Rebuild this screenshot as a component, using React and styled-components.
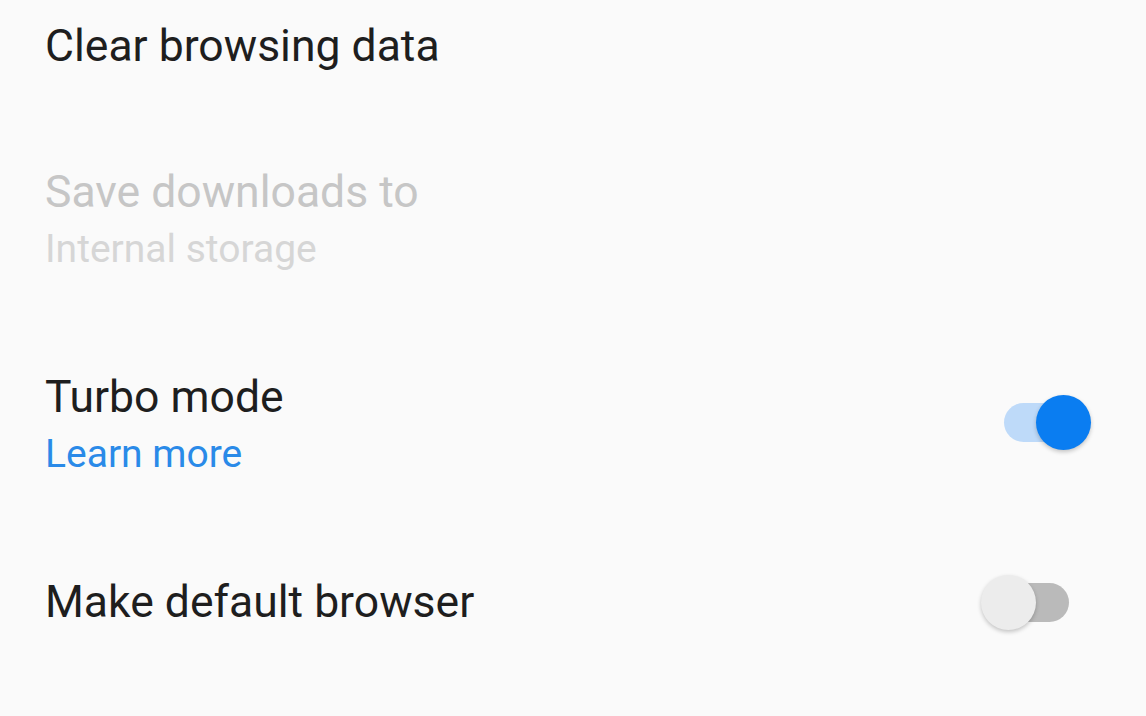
import React from "react";
import styled, { createGlobalStyle } from "styled-components";

const GlobalStyle = createGlobalStyle`
  html, body {
    margin: 0;
    padding: 0;
    background: #fafafa;
  }
  body {
    font-family: Roboto, "Noto Sans", "Liberation Sans", sans-serif;
    -webkit-font-smoothing: antialiased;
  }
`;

const Screen = styled.div`
  width: 1146px;
  height: 716px;
  overflow: hidden;
  background: #fafafa;
`;

const List = styled.div`
  display: flex;
  flex-direction: column;
  gap: 90px;
  padding-top: 18px;
`;

const Row = styled.div`
  display: flex;
  align-items: center;
  justify-content: space-between;
  padding-left: 45px;
  padding-right: ${(p) => p.$trail || 0}px;
`;

const TextBlock = styled.div`
  display: flex;
  flex-direction: column;
`;

const Title = styled.div`
  font-size: 44.5px;
  line-height: 56px;
  color: ${(p) => (p.$disabled ? "#c6c6c6" : "#1e1e1e")};
  white-space: nowrap;
`;

const Subtitle = styled.div`
  font-size: 39px;
  line-height: 59px;
  color: ${(p) => (p.$link ? "#2a8ae8" : p.$disabled ? "#d6d6d6" : "#757575")};
  white-space: nowrap;
`;

const SwitchBox = styled.div`
  position: relative;
  width: 79px;
  height: 55px;
  flex-shrink: 0;
  margin-top: ${(p) => p.$shift || 0}px;
`;

const Track = styled.div`
  position: absolute;
  left: 0;
  right: 0;
  top: 8px;
  height: 39px;
  border-radius: 20px;
  background: ${(p) => (p.$on ? "#bedaf9" : "#bababa")};
`;

const Thumb = styled.div`
  position: absolute;
  top: 0;
  left: ${(p) => (p.$on ? 32 : -9)}px;
  width: 55px;
  height: 55px;
  border-radius: 50%;
  background: ${(p) => (p.$on ? "#0a7df1" : "#ececec")};
  box-shadow: 0 2px 4px rgba(0, 0, 0, 0.22);
`;

function Switch({ on, shift }) {
  return (
    <SwitchBox $shift={shift}>
      <Track $on={on} />
      <Thumb $on={on} />
    </SwitchBox>
  );
}

export default function App() {
  return (
    <Screen>
      <GlobalStyle />
      <List>
        <Row>
          <TextBlock>
            <Title>Clear browsing data</Title>
          </TextBlock>
        </Row>
        <Row>
          <TextBlock>
            <Title $disabled>Save downloads to</Title>
            <Subtitle $disabled>Internal storage</Subtitle>
          </TextBlock>
        </Row>
        <Row $trail={63}>
          <TextBlock>
            <Title>Turbo mode</Title>
            <Subtitle $link>Learn more</Subtitle>
          </TextBlock>
          <Switch on shift={-9} />
        </Row>
        <Row $trail={77}>
          <TextBlock>
            <Title>Make default browser</Title>
          </TextBlock>
          <Switch on={false} />
        </Row>
      </List>
    </Screen>
  );
}
